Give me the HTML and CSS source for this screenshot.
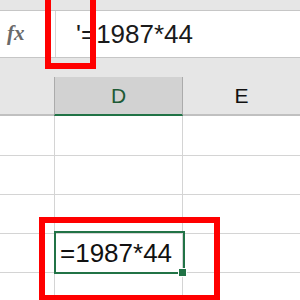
FILE: index.html
```html
<!DOCTYPE html>
<html>
<head>
<meta charset="utf-8">
<link rel="stylesheet" href="styles.css">
</head>
<body>
<div class="app">
  <div class="top-strip"></div>
  <div class="formula-bar">
    <div class="fx">fx</div>
    <div class="formula-input">'=1987*44</div>
  </div>
  <div class="gap"></div>
  <div class="col-header">
    <div class="hcell"></div>
    <div class="hcell selected">D</div>
    <div class="hcell">E</div>
  </div>
  <div class="sheet">
    <div class="row r1"><div class="cell"></div><div class="cell dcol"></div><div class="cell"></div></div>
    <div class="row"><div class="cell"></div><div class="cell dcol"></div><div class="cell"></div></div>
    <div class="row"><div class="cell"></div><div class="cell dcol"></div><div class="cell"></div></div>
    <div class="row"><div class="cell"></div><div class="cell dcol active"><span class="value">=1987*44</span><div class="sel"><div class="handle"></div></div></div><div class="cell"></div></div>
    <div class="row"><div class="cell"></div><div class="cell dcol"></div><div class="cell"></div></div>
  </div>
  <div class="mark mark-top"></div>
  <div class="mark mark-cell"></div>
</div>
</body>
</html>
```
FILE: styles.css
```css
html, body {
  margin: 0;
  padding: 0;
}
body {
  background: #e6e6e6;
  font-family: "Liberation Sans", Arial, sans-serif;
}
.app {
  position: relative;
  width: 300px;
  height: 300px;
  overflow: hidden;
  background: #e6e6e6;
}
.top-strip {
  height: 10px;
}
.formula-bar {
  display: flex;
  height: 46px;
  background: #ffffff;
  border-top: 1px solid #c6c6c6;
  border-bottom: 1px solid #c6c6c6;
}
.fx {
  width: 48px;
  padding-left: 7px;
  font-family: "Liberation Serif", "Times New Roman", serif;
  font-style: italic;
  font-weight: bold;
  font-size: 21px;
  line-height: 45px;
  color: #6a6a6a;
}
.formula-input {
  flex: 1;
  border-left: 1px solid #d4d4d4;
  padding-left: 20px;
  font-size: 26px;
  line-height: 46px;
  color: #1a1a1a;
  white-space: nowrap;
}
.gap {
  height: 19px;
}
.col-header {
  display: grid;
  grid-template-columns: 54px 129px 1fr;
  height: 39px;
}
.hcell {
  border-bottom: 2px solid #c0c0c0;
  font-size: 21px;
  line-height: 37px;
  text-align: center;
  color: #111111;
}
.hcell.selected {
  background: #d2d2d2;
  border-left: 1px solid #ababab;
  border-right: 1px solid #ababab;
  border-bottom-color: #217346;
  color: #1e5a36;
}
.sheet {
  background: #ffffff;
}
.row {
  display: grid;
  grid-template-columns: 54px 129px 1fr;
  height: 39px;
}
.row.r1 {
  height: 40px;
}
.cell {
  border-bottom: 1px solid #d4d4d4;
}
.cell.dcol {
  border-left: 1px solid #d4d4d4;
  border-right: 1px solid #d4d4d4;
}
.cell.active {
  position: relative;
}
.value {
  display: block;
  padding-left: 5px;
  font-size: 26px;
  line-height: 38px;
  color: #111111;
  white-space: nowrap;
}
.sel {
  position: absolute;
  left: -1px;
  top: -3px;
  width: 127px;
  height: 39px;
  border: 2px solid #217346;
}
.handle {
  position: absolute;
  right: -4px;
  bottom: -5px;
  width: 7px;
  height: 7px;
  background: #217346;
  border: 1px solid #ffffff;
}
.mark {
  position: absolute;
  border: 6px solid #ff0000;
  box-sizing: border-box;
}
.mark-top {
  left: 45px;
  top: -10px;
  width: 51px;
  height: 79px;
}
.mark-cell {
  left: 39px;
  top: 217px;
  width: 181px;
  height: 84px;
}
```
